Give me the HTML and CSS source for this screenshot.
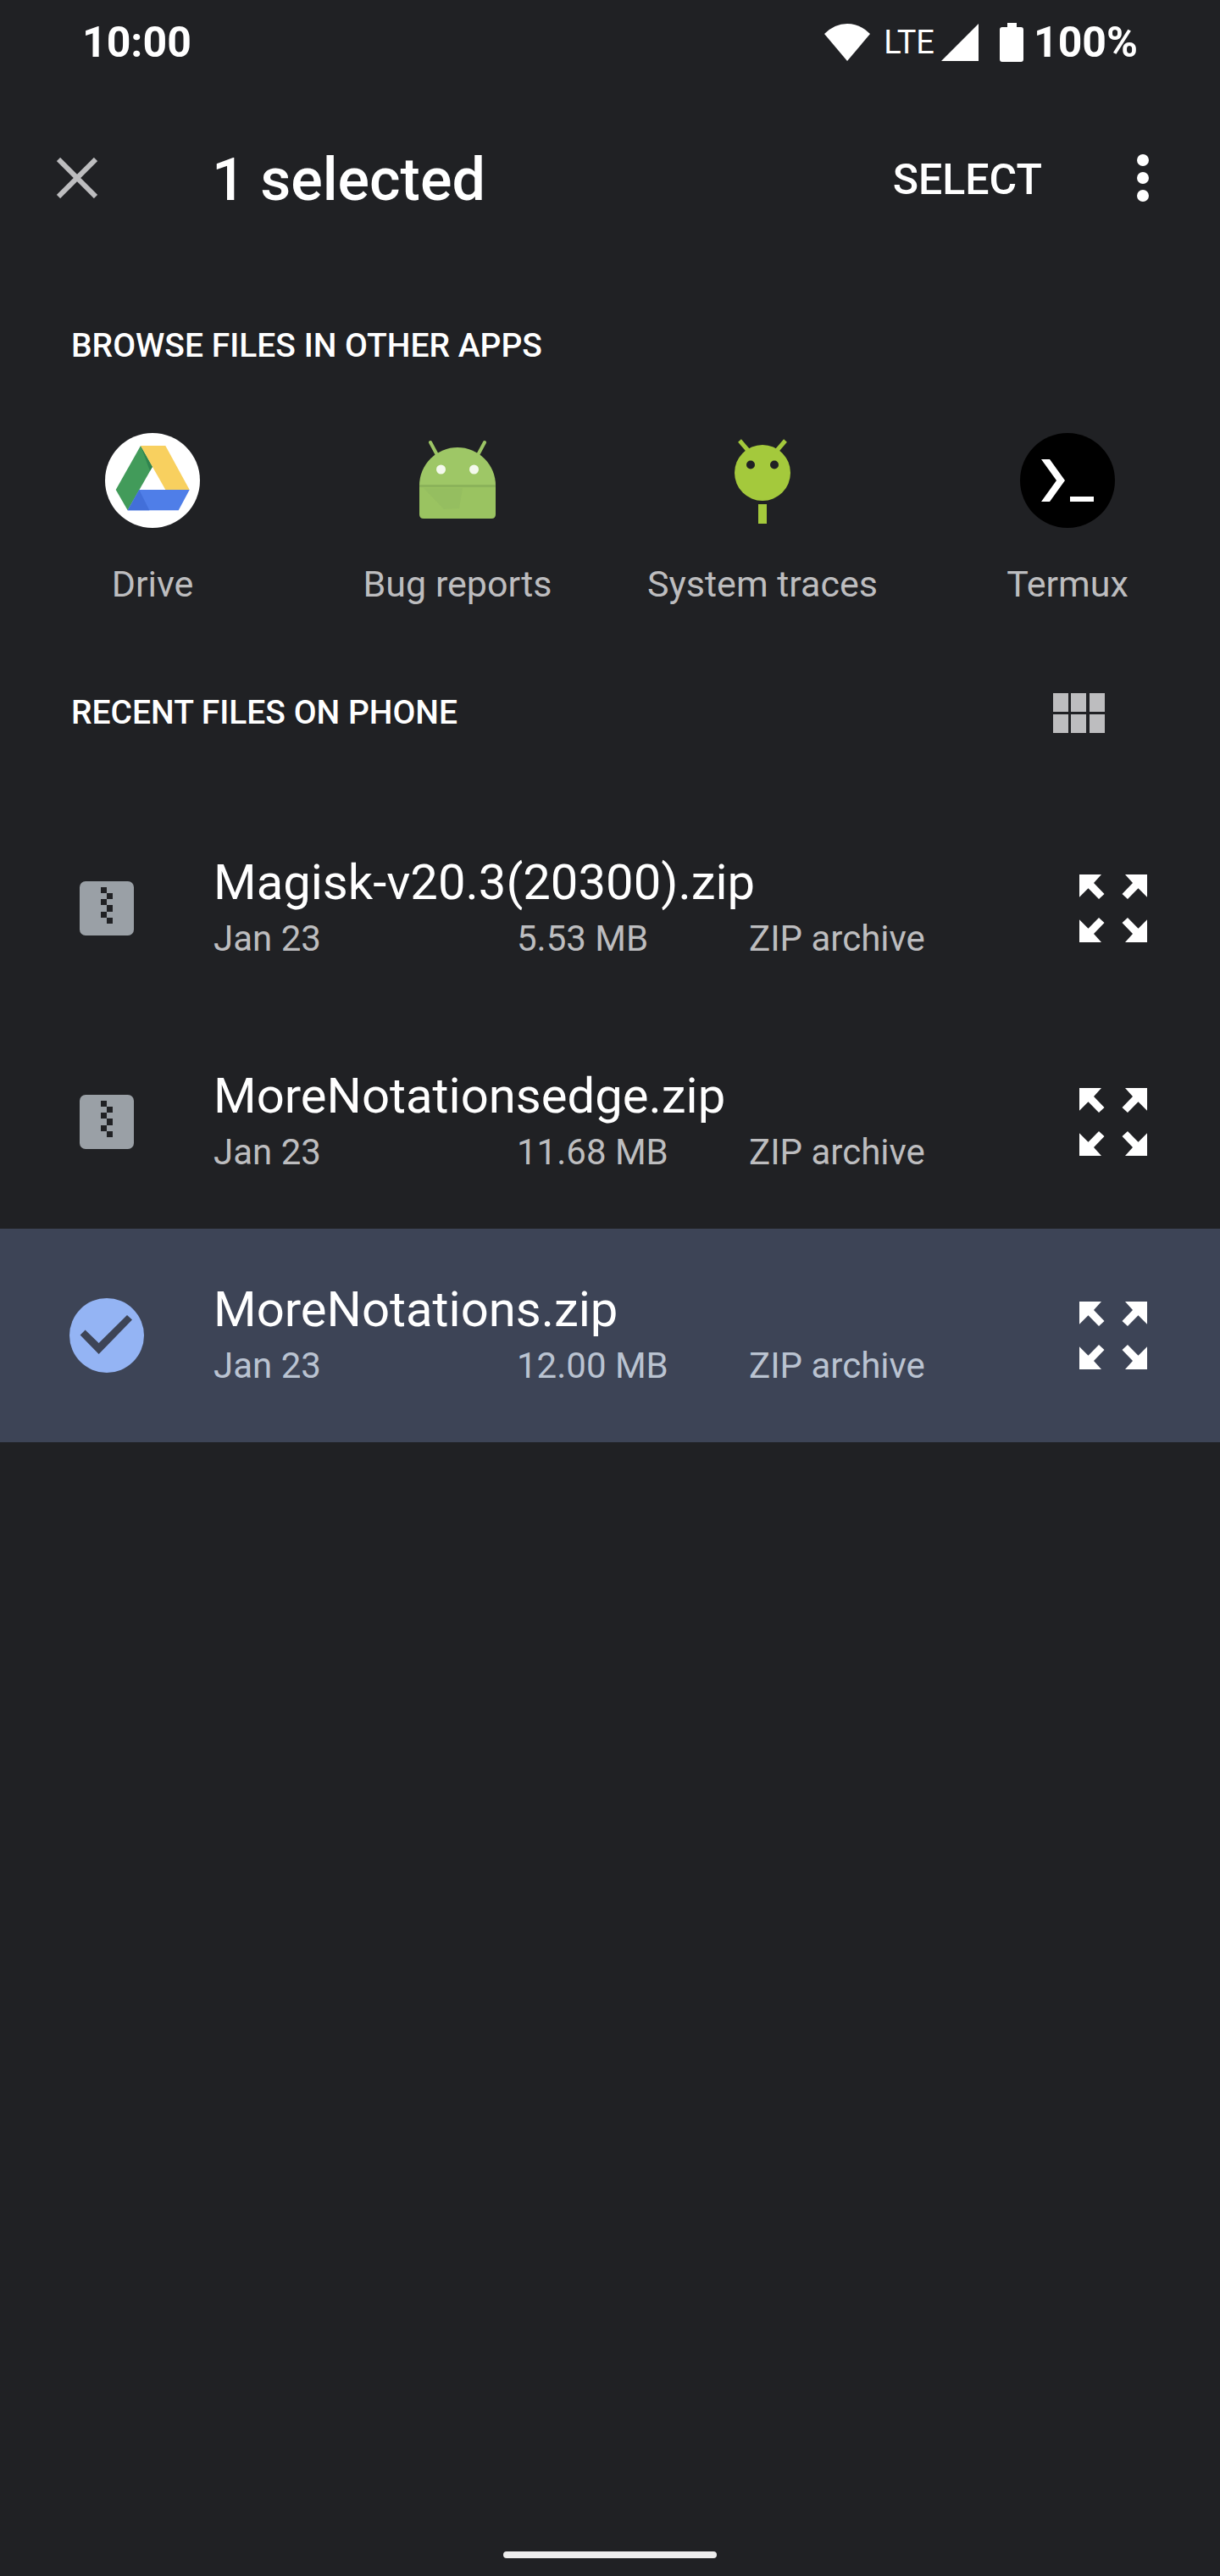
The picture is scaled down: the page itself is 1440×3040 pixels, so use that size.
FILE: index.html
```
<!DOCTYPE html>
<html lang="en">
<head>
  <meta charset="UTF-8">
  <meta name="viewport" content="width=device-width, initial-scale=1.0">
  <title>Recent files</title>
  <link rel="stylesheet" href="styles.css">
</head>
<body>
  <!-- shared icons -->
  <svg class="sprite" aria-hidden="true">
    <symbol id="zip" viewBox="0 0 64 64">
      <rect width="64" height="64" rx="7" fill="#9aa0a6"/>
      <path d="M25 7h7v7h7v7h-7v7h7v8h-7v7h7v7h-7v-7h-7v-7h7v-8h-7v-7h7v-7h-7z" fill="#202124"/>
    </symbol>
    <symbol id="expand" viewBox="0 0 80 80">
      <g fill="#fff">
        <path id="corner" d="M0 0h26l-9 10 12.500 13-6.500 6-12.500-12.700L0 26.700z"/>
        <use href="#corner" transform="matrix(-1 0 0 1 80 0)"/>
        <use href="#corner" transform="matrix(1 0 0 -1 0 80)"/>
        <use href="#corner" transform="matrix(-1 0 0 -1 80 80)"/>
      </g>
    </symbol>
  </svg>

  <div class="status-bar">
    <span class="clock">10:00</span>
    <div class="status-icons">
      <svg class="wifi" width="54" height="46" viewBox="0 0 54 46"><path d="M0 13Q12 1 27 1t27 12L27 45z" fill="#fff"/></svg>
      <span class="network">LTE</span>
      <svg class="signal" width="44" height="46" viewBox="0 0 44 46"><path d="M44 1v44H0z" fill="#fff"/></svg>
      <svg class="battery" width="28" height="46" viewBox="0 0 28 46"><path d="M9 0h11v5h5q3 0 3 3v35q0 3-3 3H3q-3 0-3-3V8q0-3 3-3h6z" fill="#fff"/></svg>
      <span class="percent">100%</span>
    </div>
  </div>

  <header class="app-bar">
    <button class="icon-btn" aria-label="Close">
      <svg width="48" height="48" viewBox="0 0 48 48"><path d="M2 2l44 44M46 2L2 46" stroke="#bdbdbf" stroke-width="6"/></svg>
    </button>
    <h1>1 selected</h1>
    <button class="select-btn">SELECT</button>
    <button class="icon-btn" aria-label="More options">
      <svg width="14" height="56" viewBox="0 0 14 56" fill="#fff"><circle cx="7" cy="7" r="7"/><circle cx="7" cy="28" r="7"/><circle cx="7" cy="49" r="7"/></svg>
    </button>
  </header>

  <main>
    <section>
      <div class="section-head">
        <h2>BROWSE FILES IN OTHER APPS</h2>
      </div>
      <div class="apps">
        <button class="app">
          <svg width="112" height="112" viewBox="0 0 112 112">
            <circle cx="56" cy="56" r="56" fill="#fff"/>
            <path d="M42 15l14 24.700-29.300 51.600L12.700 67z" fill="#429b5a"/>
            <path d="M42 15l14 24.700-3 5z" fill="#2f8450"/>
            <path d="M42 15h29.300l28.400 52H71.300z" fill="#f8d05f"/>
            <path d="M40.300 67h59.400l-13 24.300h-60z" fill="#4f7ee8"/>
            <path d="M40.300 67l12 24.300H26.700z" fill="#426fd9"/>
          </svg>
          <span>Drive</span>
        </button>
        <button class="app">
          <svg width="112" height="112" viewBox="0 0 112 112">
            <path d="M24 11l8 15M88 11l-8 15" stroke="#9cc565" stroke-width="4" stroke-linecap="round"/>
            <path d="M11 62a45 45 0 0 1 90 0z" fill="#9ec766"/>
            <path d="M11 62h90v34q0 5-5 5H16q-5 0-5-5z" fill="#9ac361"/>
            <path d="M16 65h46l-4 24-18 1z" fill="#95be60"/>
            <path d="M11 61h90v3H11z" fill="#8bb35a"/>
            <circle cx="36.500" cy="43" r="5.500" fill="#f4f9ed"/><circle cx="75.500" cy="43" r="5.500" fill="#f4f9ed"/>
          </svg>
          <span>Bug reports</span>
        </button>
        <button class="app">
          <svg width="112" height="112" viewBox="0 0 112 112" fill="#a4c93c">
            <path d="M29 9l12 14M83 9L71 23" stroke="#a4c93c" stroke-width="5"/>
            <circle cx="56" cy="47" r="33"/>
            <path d="M51 84h10v23H51z"/>
            <circle cx="42" cy="37.500" r="5" fill="#202124"/><circle cx="70" cy="37.500" r="5" fill="#202124"/>
          </svg>
          <span>System traces</span>
        </button>
        <button class="app">
          <svg width="112" height="112" viewBox="0 0 112 112">
            <circle cx="56" cy="56" r="56"/>
            <path d="M25 31h10l18 25-18 25H25l18-25zM59 75h28v6H59z" fill="#fff"/>
          </svg>
          <span>Termux</span>
        </button>
      </div>
    </section>

    <section>
      <div class="section-head recent-head">
        <h2>RECENT FILES ON PHONE</h2>
        <button class="icon-btn" aria-label="Grid view">
          <svg width="61" height="47" viewBox="0 0 61 47"><path d="M0 0h18v22H0zM21 0h18v22H21zM43 0h18v22H43zM0 25h18v22H0zM21 25h18v22H21zM43 25h18v22H43z" fill="#bdbdbf"/></svg>
        </button>
      </div>
      <ul class="files">
        <li class="file">
          <div class="file-icon"><svg width="64" height="64"><use href="#zip"/></svg></div>
          <div class="file-info">
            <h3>Magisk-v20.3(20300).zip</h3>
            <div class="meta"><span>Jan 23</span><span>5.53 MB</span><span>ZIP archive</span></div>
          </div>
          <button class="icon-btn" aria-label="Preview"><svg width="80" height="80"><use href="#expand"/></svg></button>
        </li>
        <li class="file">
          <div class="file-icon"><svg width="64" height="64"><use href="#zip"/></svg></div>
          <div class="file-info">
            <h3>MoreNotationsedge.zip</h3>
            <div class="meta"><span>Jan 23</span><span>11.68 MB</span><span>ZIP archive</span></div>
          </div>
          <button class="icon-btn" aria-label="Preview"><svg width="80" height="80"><use href="#expand"/></svg></button>
        </li>
        <li class="file selected">
          <div class="file-icon">
            <svg width="88" height="88" viewBox="0 0 88 88">
              <circle cx="44" cy="44" r="44" fill="#94b4f4"/>
              <path d="M12.600 43.500l6-6 16 15.500L68 20l6 5.500-39.400 40.500z" fill="#3d4456"/>
            </svg>
          </div>
          <div class="file-info">
            <h3>MoreNotations.zip</h3>
            <div class="meta"><span>Jan 23</span><span>12.00 MB</span><span>ZIP archive</span></div>
          </div>
          <button class="icon-btn" aria-label="Preview"><svg width="80" height="80"><use href="#expand"/></svg></button>
        </li>
      </ul>
    </section>
  </main>

  <div class="nav-pill"></div>
</body>
</html>
```
FILE: styles.css
```
* { box-sizing: border-box; }
body {
  display: flex;
  flex-direction: column;
  min-height: 100vh;
  margin: 0;
  background-color: #202124;
  color: #fff;
  font-family: Roboto, "Liberation Sans", sans-serif;
}
h1, h2, h3, ul { margin: 0; padding: 0; }
svg { display: block; }
.sprite { position: absolute; width: 0; height: 0; }
button {
  padding: 0;
  border: none;
  background: none;
  color: inherit;
  font-family: inherit;
  cursor: pointer;
}

/* status bar */
.status-bar {
  display: flex;
  justify-content: space-between;
  align-items: center;
  height: 100px;
  padding: 0 97px;
  font-size: 50px;
  font-weight: 700;
}
.status-icons { display: flex; align-items: center; }
.network {
  margin: 0 8px 0 16px;
  font-size: 38px;
  font-weight: 400;
}
.battery { margin: 0 12px 0 25px; }

/* app bar */
.app-bar {
  display: flex;
  align-items: center;
  height: 220px;
  padding: 0 84px 0 67px;
}
.app-bar h1 {
  flex: 1;
  margin-left: 135px;
  padding-top: 4px;
  font-size: 70px;
  font-weight: 500;
}
.select-btn {
  margin-right: 112px;
  padding-top: 4px;
  font-size: 50px;
  font-weight: 500;
}

.section-head {
  display: flex;
  justify-content: space-between;
  align-items: center;
  height: 56px;
  margin-top: 60px;
  padding: 0 136px 0 84px;
}
.section-head h2 {
  font-size: 39px;
  font-weight: 500;
}
.recent-head { margin-top: 96px; }

/* apps row */
.apps {
  display: grid;
  grid-template-columns: repeat(4, 1fr);
  margin-top: 75px;
}
.app {
  display: flex;
  flex-direction: column;
  align-items: center;
  gap: 38px;
  color: #bdbdbf;
  font-size: 43px;
  line-height: 56px;
}

/* file list */
.files { margin-top: 77px; list-style: none; }
.file {
  display: flex;
  align-items: center;
  height: 252px;
  padding-right: 86px;
}
.file-icon {
  display: flex;
  justify-content: center;
  width: 252px;
}
.file-info { flex: 1; }
.file h3 {
  font-size: 58px;
  font-weight: 400;
  line-height: 72px;
}
.meta {
  display: grid;
  grid-template-columns: 358px 274px 1fr;
  color: #bdbdbf;
  font-size: 42px;
  line-height: 62px;
}
.selected { background-color: #3d4456; }
.selected .meta { color: #bac3d1; }

.nav-pill {
  width: 252px;
  height: 8px;
  margin: auto auto 21px;
  border-radius: 4px;
  background-color: #ededed;
}
```
